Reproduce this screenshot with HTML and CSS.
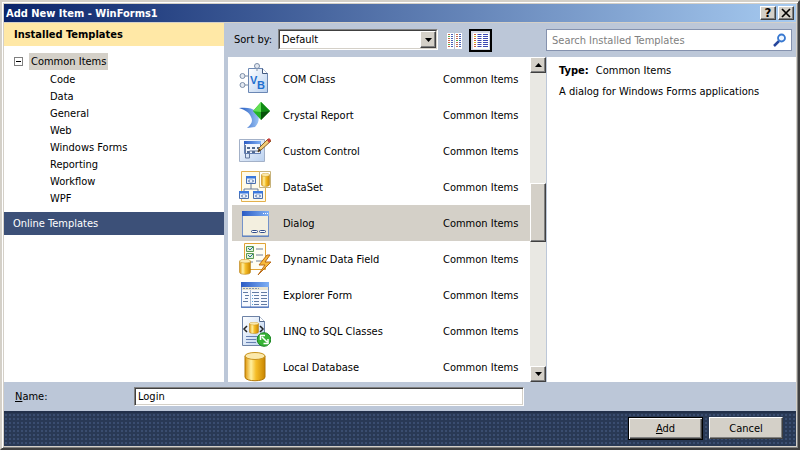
FILE: index.html
```html
<!DOCTYPE html>
<html lang="en">
<head>
<meta charset="utf-8">
<title>Add New Item - WinForms1</title>
<link rel="stylesheet" href="styles.css">
</head>
<body>
<svg class="defs" width="0" height="0" aria-hidden="true">
  <defs>
    <linearGradient id="gold"><stop offset="0" stop-color="#e0960a"/><stop offset=".3" stop-color="#fff0a0"/><stop offset=".55" stop-color="#f5bd28"/><stop offset="1" stop-color="#c98500"/></linearGradient>
    <linearGradient id="page" x2="1" y2="1"><stop offset="0" stop-color="#fff"/><stop offset="1" stop-color="#b9d0ef"/></linearGradient>
    <linearGradient id="cap"><stop offset="0" stop-color="#2c5cc4"/><stop offset="1" stop-color="#7fb0f5"/></linearGradient>
    <linearGradient id="swoosh"><stop offset="0" stop-color="#1f57c0"/><stop offset="1" stop-color="#9cc4f4"/></linearGradient>
    <symbol id="cyl" viewBox="0 0 22 30" preserveAspectRatio="none">
      <path d="M1 4v21c0 5 20 5 20 0V4z" fill="url(#gold)" stroke="#b07808"/>
      <ellipse cx="11" cy="4" rx="10" ry="3.5" fill="#fbe9ac" stroke="#c8921c"/>
    </symbol>
    <symbol id="mini" viewBox="0 0 10 8">
      <path d="M.5.5h9v7h-9z" fill="#e8f0fc" stroke="#4a6fae"/><path d="M0 0h10v2.500H0z" fill="#3a78dc"/>
      <path d="M4 3.500 2.500 5 4 6.500M6 3.500 7.500 5 6 6.500" fill="none" stroke="#34598f"/>
    </symbol>
  </defs>
</svg>
<main class="window">
  <header class="titlebar">
    <h1>Add New Item - WinForms1</h1>
    <button class="sys help" aria-label="Help">?</button>
    <button class="sys" aria-label="Close"><svg width="10" height="10" viewBox="0 0 10 10"><path d="m1 1 8 8M9 1 1 9" stroke="#000" stroke-width="1.700"/></svg></button>
  </header>

  <div class="body">
    <nav class="side">
      <h2>Installed Templates</h2>
      <div class="root">
        <button class="expander" aria-label="Collapse Common Items"><svg width="9" height="9"><path d="M2 4.500h5" stroke="#000"/></svg></button>
        <a href="#items">Common Items</a>
      </div>
      <ul>
        <li><a href="#code">Code</a></li>
        <li><a href="#data">Data</a></li>
        <li><a href="#general">General</a></li>
        <li><a href="#web">Web</a></li>
        <li><a href="#winforms">Windows Forms</a></li>
        <li><a href="#reporting">Reporting</a></li>
        <li><a href="#workflow">Workflow</a></li>
        <li><a href="#wpf">WPF</a></li>
      </ul>
      <a class="online" href="#online">Online Templates</a>
    </nav>

    <section class="content">
      <div class="tools">
        <label for="sort">Sort by:</label>
        <div class="combo">
          <select id="sort"><option>Default</option></select>
          <span class="drop"><svg width="7" height="4"><path d="M0 0h7L3.500 4z"/></svg></span>
        </div>
        <button class="view" aria-label="Small icons">
          <svg width="16" height="16" viewBox="0 0 16 16"><path d="M0 0h7v16H0zM8 0h7v16H8z" fill="#fff"/><g stroke-dasharray="1 1" stroke-width="2"><path d="M2 1v14M10 1v14" stroke="#c86a4a"/><path d="M5 1v14M13 1v14" stroke="#4a62b8"/></g><path d="M1 3h2v1H1zM9 7h2v1H9zM1 11h2v1H1z" fill="#4fae4a"/></svg>
        </button>
        <button class="view on" aria-label="Medium icons">
          <svg width="16" height="16" viewBox="0 0 16 16"><path d="M0 0h16v16H0z" fill="#fff"/><g stroke-dasharray="1 1"><path d="M2 1v14" stroke="#d0603c" stroke-width="2"/><path d="M6.500 1v14" stroke="#3c48b4" stroke-width="4"/><path d="M12.500 1v14" stroke="#3c48b4" stroke-width="5"/></g><path d="M1 3h2v1H1zM1 9h2v1H1z" fill="#d8b820"/></svg>
        </button>
        <div class="search">
          <input type="search" aria-label="Search Installed Templates" placeholder="Search Installed Templates">
          <svg width="14" height="14" viewBox="0 0 14 14"><path d="m1 13 5-5" stroke="#27469c" stroke-width="2.500"/><circle cx="8.500" cy="5" r="3.500" fill="#eef6ff" stroke="#3878d0" stroke-width="1.800"/></svg>
        </div>
      </div>

      <div class="panes">
        <div class="list" id="items">
          <table>
            <tr><td><svg class="ico" viewBox="0 0 32 32"><path d="M9.500 5.500h14l5 5v19h-19z" fill="url(#page)" stroke="#6b87b4"/><path d="M23.500 5.500v5h5" fill="#fff" stroke="#40587f"/><path d="M18 3v5M4 13h6M4 22h6" stroke="#7b8da8"/><g fill="#e4e9f1" stroke="#7b8da8"><circle cx="18" cy="3" r="2.500"/><circle cx="3.500" cy="13" r="2.500"/><circle cx="3.500" cy="22" r="2.500"/></g><text class="vb" x="11" y="21">V</text><text class="vb" x="18" y="26">B</text></svg></td><td>COM Class</td><td>Common Items</td></tr>
            <tr><td><svg class="ico" viewBox="0 0 32 32"><path d="M0 9c8-1 14 0 18 4 3 5 2 11-2 15l-8 1c5-4 6-7 4-11C10 13 6 11 0 9z" fill="url(#swoosh)"/><path d="M22 3l9 9-9 9-8-9z" fill="#24b424"/><path d="m22 3 9 9-9 1z" fill="#108a14"/><path d="m22 13 9-1-9 9z" fill="#06520a"/><path d="m22 3-8 9 8 1z" fill="#62de54"/></svg></td><td>Crystal Report</td><td>Common Items</td></tr>
            <tr><td><svg class="ico" viewBox="0 0 32 32"><path d="M.5 4.500h25v22H.5z" fill="url(#page)" stroke="#a3b1c8"/><path d="M5.500 6.500h16v12h-16z" fill="#f2f6fd" stroke="#6380b4"/><path d="M5 6h17v3H5z" fill="url(#cap)"/><path d="M8 12h3v2H8zm5 0h3v2h-3zm5 0h2v2h-2zM8 16h3v2H8zm5 0h3v2h-3z" fill="#51698e"/><path d="M6.500 10v13h4v-7h10" fill="none" stroke="#61769c"/><path d="m19 17 1-4 9-9 3 2-10 9z" fill="#f2cc78" stroke="#886028"/><path d="m28 5 2-2 2 2-2 3z" fill="#c83e3e"/><path d="m19 17 1-3 2 1z" fill="#222"/></svg></td><td>Custom Control</td><td>Common Items</td></tr>
            <tr><td><svg class="ico" viewBox="0 0 32 32"><path d="M2.500.5h24v30h-24z" fill="#fffbe9" stroke="#e3b04c"/><path d="M12 13v5M5 22v-4h14v4" fill="none" stroke="#6b7c99"/><use href="#mini" x="7" y="5" width="10" height="8"/><use href="#mini" x="0" y="20" width="10" height="8"/><use href="#mini" x="14" y="20" width="10" height="8"/><path d="M20.500.5h11v16h-11z" fill="#fff" stroke="#c7b37c"/><use href="#cyl" x="22" y="2" width="9" height="14"/></svg></td><td>DataSet</td><td>Common Items</td></tr>
            <tr class="sel" aria-selected="true"><td><svg class="ico" viewBox="0 0 32 32"><path d="M3.500 4.500h26v25h-26z" fill="#f3efdf" stroke="#7493ca"/><path d="M3 4h27v5H3z" fill="url(#cap)"/><path d="M24 6h1v1h-1zm2 0h1v1h-1zm2 0h1v1h-1z" fill="#fff"/><rect x="12.500" y="23.500" width="6" height="2" rx="1" fill="#fff" stroke="#344f8c"/><rect x="20.500" y="23.500" width="6" height="2" rx="1" fill="#fff" stroke="#344f8c"/><path d="M3 28.500h27v1H3z" fill="#5377b8"/></svg></td><td>Dialog</td><td>Common Items</td></tr>
            <tr><td><svg class="ico" viewBox="0 0 32 32"><path d="M5.500.5h21v26h-21z" fill="#fffdf2" stroke="#e0a438"/><path d="M7.500 3.500h7v5h-7zm0 7h7v5h-7z" fill="#dff0d8" stroke="#5a9a50"/><path d="m9 5 2 2 3-3M9 12l2 2 3-3" fill="none" stroke="#2b6a94"/><path d="M17 6h7M17 12h7M17 18h7M8 19h6" stroke="#718097"/><use href="#cyl" x="0" y="16" width="12" height="16"/><path d="m28 12-8 10h6l-7 10 13-13h-6l5-7z" fill="#f6b93b" stroke="#b96b18"/></svg></td><td>Dynamic Data Field</td><td>Common Items</td></tr>
            <tr><td><svg class="ico" viewBox="0 0 32 32"><path d="M2.500 3.500h27v25h-27z" fill="#f8faff" stroke="#7493ca"/><path d="M2 3h28v5H2z" fill="url(#cap)"/><path d="M3 8h26v3H3z" fill="#e9e4d0"/><path d="M4 9.500h16" stroke="#8494ad" stroke-dasharray="2 1"/><path d="M11.500 11v17" stroke="#aab9d4"/><path d="M4 13.500h5M6 16.500h4M6 19.500h3M4 22.500h5M13 13.500h7M22 13.500h6M15 16.500h5M22 16.500h6M15 19.500h5M22 19.500h6M15 22.500h5M22 22.500h6M15 25.500h5M22 25.500h6" stroke="#627ba4"/><path d="M13 16h1v1h-1zm0 3h1v1h-1zm0 3h1v1h-1zm0 3h1v1h-1z" fill="#54a4dc"/><path d="M2 28h28" stroke="#446ab4"/></svg></td><td>Explorer Form</td><td>Common Items</td></tr>
            <tr><td><svg class="ico" viewBox="0 0 32 32"><path d="M3.500 1.500h17l5 5v24h-22z" fill="url(#page)" stroke="#6d82a6"/><path d="M20.500 1.500v5h5" fill="#fff" stroke="#53698d"/><path d="m8 11-3 3 3 3M21 11l3 3-3 3" fill="none" stroke="#222" stroke-width="1.500"/><use href="#cyl" x="10" y="7" width="10" height="12"/><path d="M7 21.500h13M7 24.500h10M7 27.500h10" stroke="#6680b1"/><circle cx="25" cy="24.500" r="6.800" fill="#36b335" stroke="#188420"/><path d="m23 22 5 5M21.500 25v-4.500H26M24.500 28.500H29V24" fill="none" stroke="#fff" stroke-width="1.500"/></svg></td><td>LINQ to SQL Classes</td><td>Common Items</td></tr>
            <tr><td><svg class="ico" viewBox="0 0 32 32"><use href="#cyl" x="5" y="1" width="22" height="30"/></svg></td><td>Local Database</td><td>Common Items</td></tr>
          </table>
          <div class="scroll">
            <button aria-label="Scroll up"><svg width="7" height="4"><path d="M0 4h7L3.500 0z"/></svg></button>
            <div class="track"><div class="thumb"></div></div>
            <button aria-label="Scroll down"><svg width="7" height="4"><path d="M0 0h7L3.500 4z"/></svg></button>
          </div>
        </div>
        <aside class="info">
          <p><b>Type:</b> Common Items</p>
          <p>A dialog for Windows Forms applications</p>
        </aside>
      </div>
    </section>
  </div>

  <div class="namebar">
    <label for="name"><u>N</u>ame:</label>
    <input id="name" type="text" value="Login">
  </div>
  <footer>
    <button class="btn default"><span><u>A</u>dd</span></button>
    <button class="btn">Cancel</button>
  </footer>
</main>
</body>
</html>
```
FILE: styles.css
```css
* { box-sizing: border-box; }
body { margin: 0; color: #000; font: 11px/17px "DejaVu Sans Condensed", "DejaVu Sans", sans-serif; }
h1, h2, p, ul { margin: 0; padding: 0; font-size: inherit; }
ul { list-style: none; }
a { color: inherit; text-decoration: none; }
button, input, select { margin: 0; padding: 0; border: 0; border-radius: 0; font: inherit; color: inherit; }
button { display: flex; align-items: center; justify-content: center; }
.defs { position: absolute; }

.window {
  height: 100vh; display: flex; flex-direction: column; padding: 2px;
  background: #d4d0c8; border: 2px solid; border-color: #d4d0c8 #404040 #404040 #d4d0c8;
  box-shadow: inset 1px 1px #fff, inset -1px -1px #808080;
}
.titlebar {
  height: 19px; display: flex; align-items: center; gap: 2px; padding: 0 2px;
  color: #fff; background: linear-gradient(90deg, #0a246a, #a6caf0);
  border-bottom: 1px solid #d4d0c8;
}
.titlebar h1 { flex: 1; }
.sys, .scroll button, .thumb, .drop {
  background: #d4d0c8; border: 1px solid; border-color: #fff #404040 #404040 #fff;
  box-shadow: inset -1px -1px #808080;
}
.sys { width: 16px; height: 14px; }
.help { color: #000; font-weight: bold; font-size: 13px; line-height: 12px; }

.body { flex: 1; min-height: 0; display: flex; background: #bcc7d8; gap: 4px; }
.side { flex: 0 0 220px; background: #fff; }
.side h2 { height: 23px; padding-left: 10px; line-height: 23px; background: #ffe8a6; }
.root { display: flex; align-items: center; gap: 6px; padding: 7px 10px 0; }
.root a { padding: 0 2px; background: #d4d0c8; }
.expander { width: 9px; height: 9px; background: #fff; outline: 1px solid #808080; outline-offset: -1px; }
.side ul { padding: 1px 0 5px 46px; }
.online { display: block; height: 23px; padding-left: 9px; line-height: 23px; color: #fff; background: #3c5078; }

.content { flex: 1; min-width: 0; display: flex; flex-direction: column; }
.tools { flex: 0 0 34px; display: flex; align-items: flex-start; padding: 6px 4px 0 6px; }
.tools label { flex: 0 0 44px; line-height: 22px; white-space: nowrap; }
.combo { position: relative; width: 160px; height: 21px; border: 1px solid; border-color: #808080 #fff #fff #808080; }
.combo select {
  display: block; width: 100%; height: 100%; appearance: none; background: #fff; padding-left: 2px;
  border: 1px solid; border-color: #404040 #d4d0c8 #d4d0c8 #404040;
}
.drop { position: absolute; right: 1px; top: 1px; bottom: 1px; width: 16px; display: flex; align-items: center; justify-content: center; pointer-events: none; }
.view { width: 23px; height: 23px; margin-left: 5px; background: none; }
.view.on { margin-left: 3px; border: 2px solid #000; background: #d4d8e4; }
.search { flex: 1; height: 22px; margin-left: 54px; padding: 0 4px 0 5px; display: flex; align-items: center; background: #fff; border: 1px solid #8592ae; }
.search input { flex: 1; min-width: 0; height: 18px; background: none; }
.search input::placeholder { color: #808080; opacity: 1; }

.panes { flex: 1; min-height: 0; display: flex; gap: 1px; }
.list { flex: 0 0 318px; display: flex; overflow: hidden; background: #fff; padding-left: 4px; }
table { flex: 1; align-self: flex-start; margin-top: 4px; border-collapse: collapse; table-layout: fixed; }
tr { height: 36px; }
td { padding: 0; white-space: nowrap; }
td:nth-child(1) { width: 51px; padding-left: 7px; }
td:nth-child(2) { width: 160px; }
.sel { background: #d4d0c8; }
.ico { display: block; width: 32px; height: 32px; }
.vb { font: bold 11px "Liberation Sans", sans-serif; fill: #1f6fd0; }
.scroll { width: 16px; display: flex; flex-direction: column; background: #e9e8e3; }
.scroll button { height: 16px; }
.track { flex: 1; display: grid; grid-template-rows: 110fr 59fr 124fr; }
.thumb { grid-row: 2; }
.info { flex: 1; padding: 5px 12px; background: #fff; }
.info p + p { margin-top: 4px; }
.info b { margin-right: 4px; }

.namebar { height: 29px; display: flex; align-items: center; padding-left: 11px; background: #bcc7d8; }
.namebar label { flex: 0 0 119px; }
.namebar input {
  flex: 0 1 390px; height: 19px; padding-left: 3px; background: #fff;
  border: 1px solid; border-color: #808080 #fff #fff #808080; box-shadow: inset 1px 1px #404040, inset -1px -1px #d4d0c8;
}
footer {
  height: 35px; display: flex; gap: 6px; justify-content: flex-end; align-items: flex-start; padding: 4px 13px;
  background: #293955 radial-gradient(#3a4d70 1px, transparent 1px) 0 0 / 4px 4px; border-top: 2px solid #22304a;
}
.btn { width: 74px; height: 22px; background: #d4d0c8; border: 1px solid; border-color: #fff #404040 #404040 #fff; box-shadow: inset -1px -1px #808080; }
.btn.default { width: 75px; height: 23px; border-color: #000; box-shadow: inset 1px 1px #fff, inset -1px -1px #404040, inset -2px -2px #808080; }
```
